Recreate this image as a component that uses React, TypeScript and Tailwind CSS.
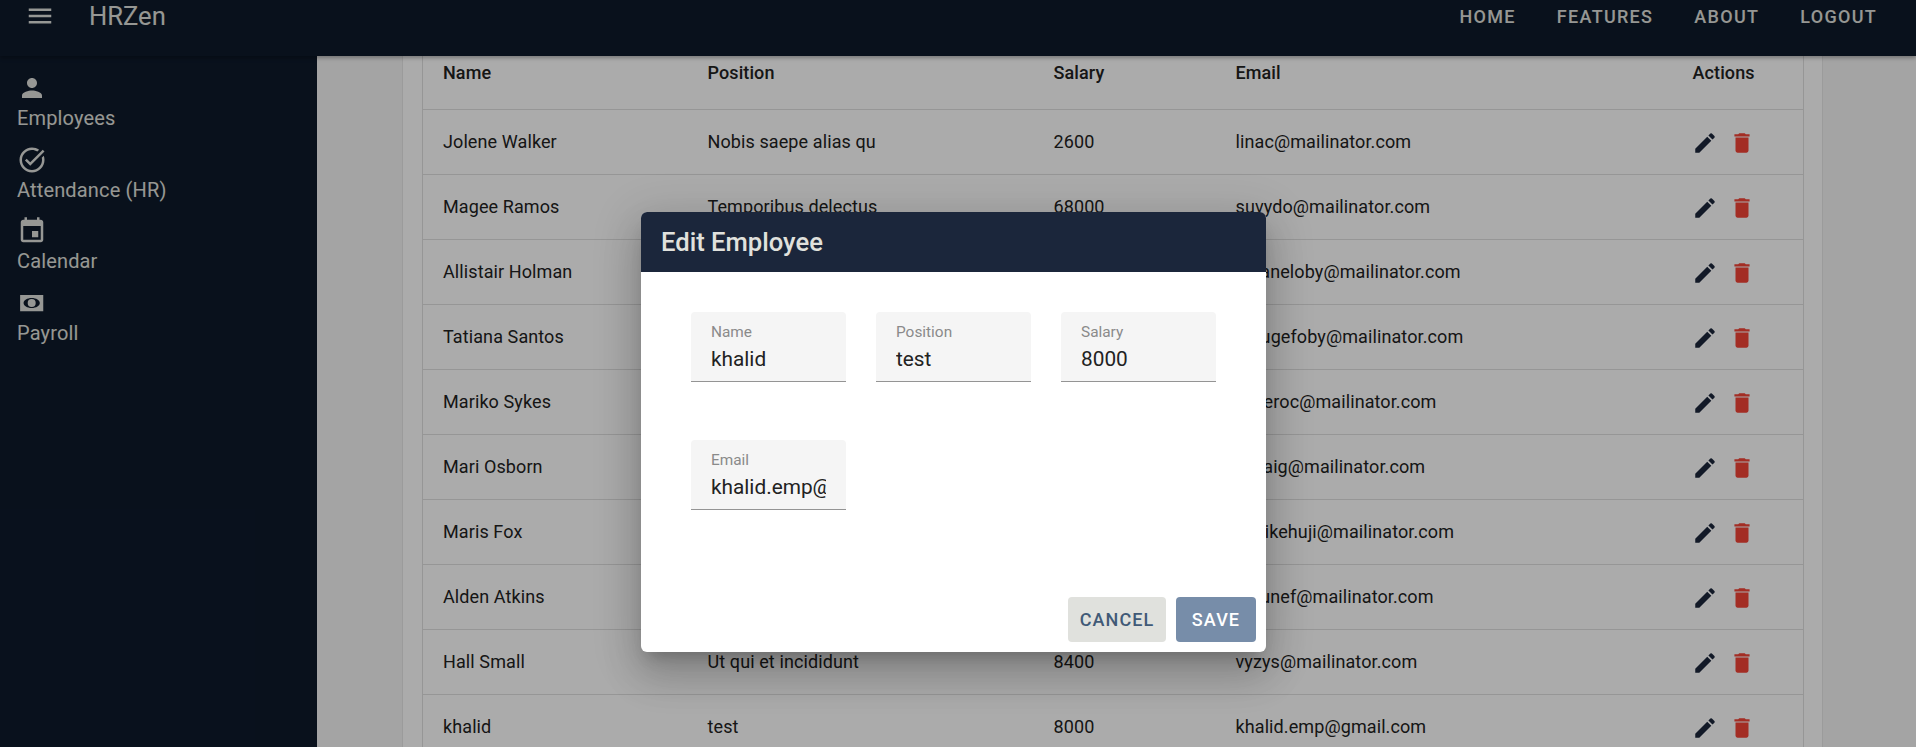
import { ReactNode } from "react";

const rows = [
  ["Jolene Walker", "Nobis saepe alias qu", "2600", "linac@mailinator.com"],
  ["Magee Ramos", "Temporibus delectus", "68000", "suvydo@mailinator.com"],
  ["Allistair Holman", "Sunt quia dolor", "5300", "qujaneloby@mailinator.com"],
  ["Tatiana Santos", "Quis ad nulla", "7100", "xarugefoby@mailinator.com"],
  ["Mariko Sykes", "Ipsum illo", "9200", "kuxeroc@mailinator.com"],
  ["Mari Osborn", "Culpa magna", "4300", "pyzaig@mailinator.com"],
  ["Maris Fox", "Eos vero", "3900", "dazikehuji@mailinator.com"],
  ["Alden Atkins", "Aut dolore", "6100", "hibunef@mailinator.com"],
  ["Hall Small", "Ut qui et incididunt", "8400", "vyzys@mailinator.com"],
  ["khalid", "test", "8000", "khalid.emp@gmail.com"],
];

const Icon = ({ d, className }: { d: string; className?: string }) => (
  <svg viewBox="0 0 24 24" fill="currentColor" fillRule="evenodd" className={className}>
    <path d={d} />
  </svg>
);

const icons = {
  menu: "M3 18h18v-2H3v2zm0-5h18v-2H3v2zm0-7v2h18V6H3z",
  person: "M12 12c2.21 0 4-1.79 4-4s-1.79-4-4-4-4 1.79-4 4 1.79 4 4 4zm0 2c-2.67 0-8 1.34-8 4v2h16v-2c0-2.66-5.33-4-8-4z",
  task: "M22 5.18 10.59 16.6l-4.24-4.24 1.41-1.41 2.83 2.83 10-10L22 5.18zm-2.21 5.04c.13.57.21 1.17.21 1.78 0 4.42-3.58 8-8 8s-8-3.58-8-8 3.58-8 8-8c1.58 0 3.04.46 4.28 1.25l1.44-1.44C16.1 2.67 14.13 2 12 2 6.48 2 2 6.48 2 12s4.48 10 10 10 10-4.48 10-10c0-1.19-.22-2.33-.6-3.39l-1.61 1.61z",
  event: "M17 12h-5v5h5v-5zM16 1v2H8V1H6v2H5c-1.11 0-1.99.9-1.99 2L3 19c0 1.1.89 2 2 2h14c1.1 0 2-.9 2-2V5c0-1.1-.9-2-2-2h-1V1h-2zm3 18H5V8h14v11z",
  money: "M2.500 5.500h18.500v13H2.500zM11.750 8c-3.600 0-6.500 1.800-6.500 4s2.900 4 6.500 4 6.500-1.800 6.500-4-2.900-4-6.500-4zM11.750 8.800a3.200 3.200 0 1 1 0 6.400a3.200 3.200 0 1 1 0-6.400z",
  edit: "M3 17.25V21h3.75L17.81 9.94l-3.75-3.75L3 17.25zM20.71 7.04c.39-.39.39-1.02 0-1.41l-2.34-2.34a.9959.9959 0 0 0-1.41 0l-1.83 1.83 3.75 3.75 1.83-1.83z",
  trash: "M6 19c0 1.100.9 2 2 2h8c1.100 0 2-.9 2-2V7H6v12zM19 4h-3.500l-1-1h-5l-1 1H5v2h14V4z",
};

const NavItem = ({ icon, label }: { icon: string; label: string }) => (
  <div className="h-[71.500px] pl-[17px] flex flex-col">
    <Icon d={icon} className="w-[30px] h-[30px]" />
    <span className="text-[20px] leading-[30px] tracking-[0.15px]">{label}</span>
  </div>
);

const Field = ({ label, value }: { label: string; value: string }) => (
  <div className="w-[155px] h-[70px] bg-[#f5f5f5] rounded-t-[4px] border-b border-[#949494] px-5 pt-[10px]">
    <div className="text-[15.400px] leading-[20px] text-[#8a8a8a]">{label}</div>
    <input
      readOnly
      value={value}
      className="block w-full mt-[4px] h-[28px] bg-transparent outline-none text-[20.800px] text-[#222]"
    />
  </div>
);

const Th = ({ children }: { children: ReactNode }) => (
  <th className="text-left font-medium px-5 py-[19px]">{children}</th>
);

export default function App() {
  return (
    <div className="relative h-[747px] overflow-hidden bg-[#f5f5f5] text-[#222] font-['Roboto',sans-serif]">
      <header className="relative z-10 h-[56px] bg-[#0e1a2b] text-[#e0e1dd] flex items-start justify-between shadow-[0_2px_4px_rgba(0,0,0,0.3)]">
        <div className="flex items-center h-[32px]">
          <Icon d={icons.menu} className="w-[30px] h-[30px] ml-[25px]" />
          <span className="ml-[34px] text-[25.600px]">HRZen</span>
        </div>
        <nav className="flex items-center h-[32px] pr-[39px] gap-[41px] text-[18px] font-medium tracking-[1.300px]">
          <span>HOME</span>
          <span>FEATURES</span>
          <span>ABOUT</span>
          <span>LOGOUT</span>
        </nav>
      </header>

      <div className="flex h-[691px]">
        <aside className="w-[317px] shrink-0 bg-[#0e1a2b] text-[#e0e1dd] pt-[17px]">
          <NavItem icon={icons.person} label="Employees" />
          <NavItem icon={icons.task} label="Attendance (HR)" />
          <NavItem icon={icons.event} label="Calendar" />
          <NavItem icon={icons.money} label="Payroll" />
        </aside>

        <main className="flex-1 min-w-0 overflow-hidden pl-[85px] pr-[93px]">
          <div className="-mt-[19px] bg-white border-x border-[#e8e8e8] px-[19px] pb-10">
            <table className="w-full table-fixed border-collapse border-x border-[#e0e0e0] text-[18px] tracking-[0.1px]">
              <colgroup>
                <col className="w-[265px]" />
                <col className="w-[346px]" />
                <col className="w-[182px]" />
                <col className="w-[457px]" />
                <col className="w-[131px]" />
              </colgroup>
              <thead>
                <tr className="h-[72px] border-b border-[#e0e0e0]">
                  <Th>Name</Th>
                  <Th>Position</Th>
                  <Th>Salary</Th>
                  <Th>Email</Th>
                  <Th>Actions</Th>
                </tr>
              </thead>
              <tbody>
                {rows.map((r) => (
                  <tr key={r[0]} className="h-[65px] border-b border-[#e0e0e0]">
                    {r.map((c, i) => (
                      <td key={i} className="px-5 whitespace-nowrap">{c}</td>
                    ))}
                    <td className="px-5">
                      <div className="flex gap-[11px] -ml-[1px] mt-[2px]">
                        <Icon d={icons.edit} className="w-[26px] h-[26px] text-[#1b263b]" />
                        <Icon d={icons.trash} className="w-[26px] h-[26px] text-[#f44336]" />
                      </div>
                    </td>
                  </tr>
                ))}
              </tbody>
            </table>
          </div>
        </main>
      </div>

      {/* backdrop + edit dialog */}
      <div className="absolute inset-0 z-20 bg-black/33 pt-[212px] pl-[641px]">
        <div className="w-[625px] h-[440px] bg-white rounded-[6px] overflow-hidden flex flex-col shadow-[0_11px_15px_-7px_rgba(0,0,0,0.2),0_24px_38px_3px_rgba(0,0,0,0.14),0_9px_46px_8px_rgba(0,0,0,0.12)]">
          <div className="h-[60px] shrink-0 bg-[#1b263b] text-[#e0e1dd] text-[25.600px] font-medium flex items-center px-5">
            Edit Employee
          </div>
          <div className="flex-1 pt-10 pl-[50px]">
            <div className="flex gap-[30px]">
              <Field label="Name" value="khalid" />
              <Field label="Position" value="test" />
              <Field label="Salary" value="8000" />
            </div>
            <div className="mt-[58px]">
              <Field label="Email" value="khalid.emp@gmail.com" />
            </div>
          </div>
          <div className="flex justify-end gap-[10px] px-[10px] pb-[10px]">
            <button className="w-[98px] h-[45px] rounded-[4px] bg-[#e0e1dd] text-[#415a77] text-[18px] font-medium tracking-[1.100px]">CANCEL</button>
            <button className="w-[80px] h-[45px] rounded-[4px] bg-[#778da9] text-white text-[18px] font-medium tracking-[1.100px]">SAVE</button>
          </div>
        </div>
      </div>
    </div>
  );
}
